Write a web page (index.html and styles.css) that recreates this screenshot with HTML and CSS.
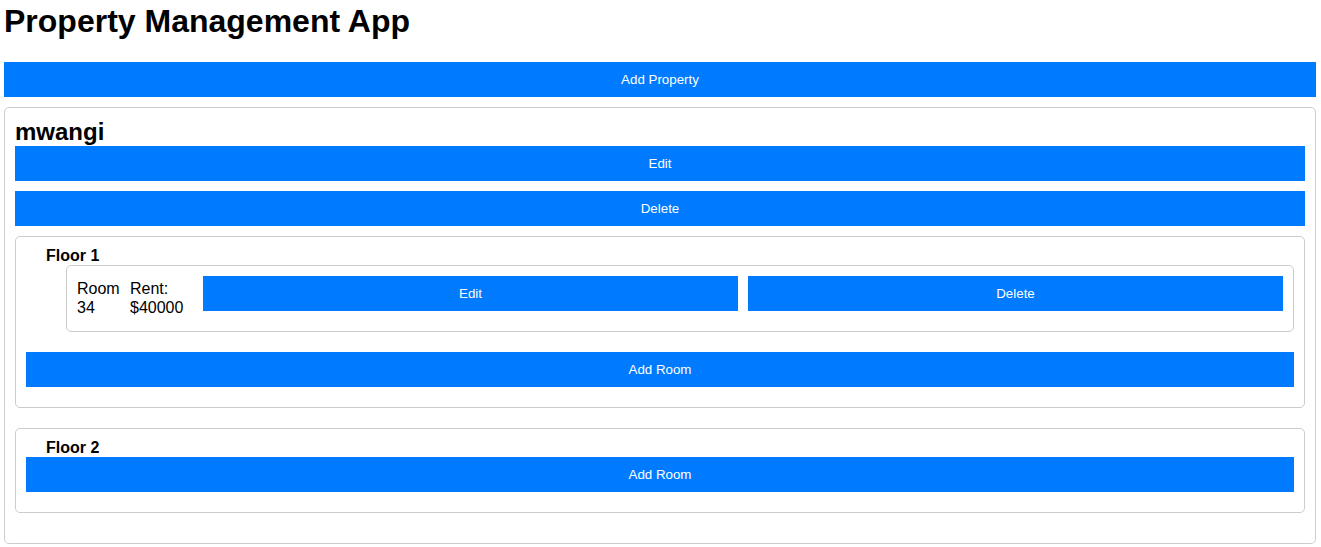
FILE: index.html
```html
<!DOCTYPE html>
<html lang="en">
<head>
<meta charset="utf-8">
<title>Property Management App</title>
<link rel="stylesheet" href="styles.css">
</head>
<body>
<div class="app">
  <h1 class="app-title">Property Management App</h1>
  <button class="btn">Add Property</button>
  <div class="property">
    <h2 class="property-name">mwangi</h2>
    <button class="btn">Edit</button>
    <button class="btn">Delete</button>
    <div class="floor">
      <h3 class="floor-title">Floor 1</h3>
      <div class="rooms">
        <div class="room">
          <span class="room-num">Room 34</span>
          <span class="room-rent">Rent: $40000</span>
          <button class="btn btn-flex">Edit</button>
          <button class="btn btn-flex">Delete</button>
        </div>
      </div>
      <button class="btn">Add Room</button>
    </div>
    <div class="floor">
      <h3 class="floor-title">Floor 2</h3>
      <button class="btn">Add Room</button>
    </div>
  </div>
</div>
</body>
</html>
```

FILE: styles.css
```css
html, body {
  margin: 0;
  padding: 0;
  background: #ffffff;
}

body {
  font-family: "Liberation Sans", Arial, sans-serif;
  color: #000;
  font-size: 16px;
}

.app {
  padding: 3px 5px 0 4px;
}

.app-title {
  font-size: 32px;
  font-weight: bold;
  margin: 0 0 22px 0;
  line-height: 37px;
}

.btn {
  display: block;
  width: 100%;
  height: 35px;
  margin: 0 0 10px 0;
  padding: 0;
  border: none;
  border-radius: 0;
  background: #007bff;
  color: #ffffff;
  font-family: "Liberation Sans", Arial, sans-serif;
  font-size: 13.33px;
}

.property {
  border: 1px solid #cccccc;
  border-radius: 5px;
  padding: 10px;
}

.property-name {
  margin: 0;
  font-size: 24px;
  line-height: 28px;
  font-weight: bold;
}

.floor {
  border: 1px solid #cccccc;
  border-radius: 5px;
  padding: 10px;
  margin-bottom: 20px;
}

.floor-title {
  margin: 0;
  padding-left: 20px;
  font-size: 16px;
  line-height: 18px;
  font-weight: bold;
}

.rooms {
  padding-left: 40px;
  margin-bottom: 20px;
}

.room {
  display: flex;
  align-items: center;
  gap: 10px;
  border: 1px solid #cccccc;
  border-radius: 5px;
  padding: 10px;
  line-height: 18.4px;
}

.room-num {
  flex: none;
  width: 43px;
}

.room-rent {
  flex: none;
  width: 63px;
}

.btn-flex {
  flex: 1 1 0;
  width: auto;
  min-width: 0;
}
```
